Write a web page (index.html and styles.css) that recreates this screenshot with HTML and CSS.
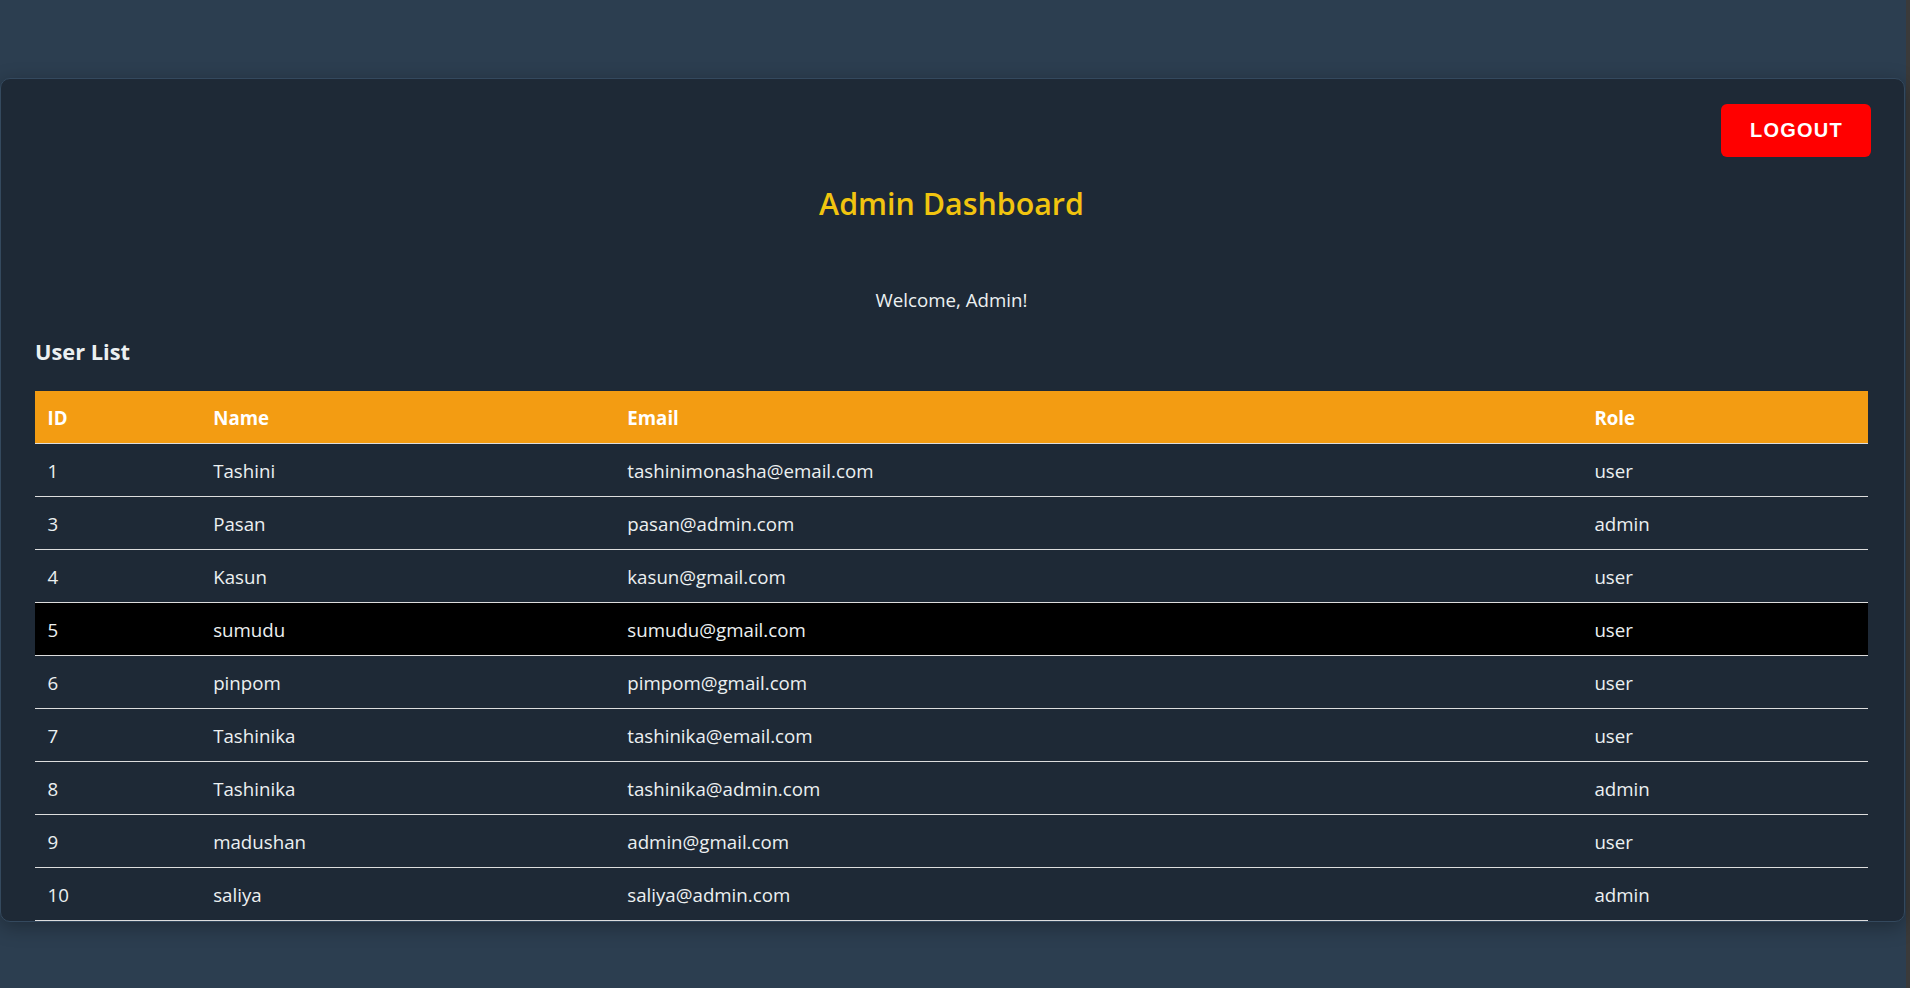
FILE: index.html
```html
<!DOCTYPE html>
<html lang="en">
<head>
<meta charset="utf-8">
<title>Admin Dashboard</title>
<link rel="stylesheet" href="styles.css">
</head>
<body>
<main class="card">
  <div class="topbar">
    <button class="logout" type="button">Logout</button>
  </div>
  <h2 class="title">Admin Dashboard</h2>
  <p class="welcome">Welcome, Admin!</p>
  <h3 class="section">User List</h3>
  <table class="users">
    <colgroup>
      <col class="c-id">
      <col class="c-name">
      <col class="c-email">
      <col class="c-role">
    </colgroup>
    <thead>
      <tr><th>ID</th><th>Name</th><th>Email</th><th>Role</th></tr>
    </thead>
    <tbody>
      <tr><td>1</td><td>Tashini</td><td>tashinimonasha@email.com</td><td>user</td></tr>
      <tr><td>3</td><td>Pasan</td><td>pasan@admin.com</td><td>admin</td></tr>
      <tr><td>4</td><td>Kasun</td><td>kasun@gmail.com</td><td>user</td></tr>
      <tr class="active"><td>5</td><td>sumudu</td><td>sumudu@gmail.com</td><td>user</td></tr>
      <tr><td>6</td><td>pinpom</td><td>pimpom@gmail.com</td><td>user</td></tr>
      <tr><td>7</td><td>Tashinika</td><td>tashinika@email.com</td><td>user</td></tr>
      <tr><td>8</td><td>Tashinika</td><td>tashinika@admin.com</td><td>admin</td></tr>
      <tr><td>9</td><td>madushan</td><td>admin@gmail.com</td><td>user</td></tr>
      <tr><td>10</td><td>saliya</td><td>saliya@admin.com</td><td>admin</td></tr>
    </tbody>
  </table>
</main>
</body>
</html>
```

FILE: styles.css
```css
html {
  background: linear-gradient(to right, #2c3e50 calc(100% - 4px), #3a3a3a calc(100% - 4px));
  min-height: 100%;
}

body {
  margin: 0;
  min-height: 100vh;
  font-family: "Segoe UI", "Open Sans", "Noto Sans", sans-serif;
  color: #ecf0f1;
  overflow: hidden;
}

.card {
  box-sizing: border-box;
  width: 1905px;
  margin: 78px 0 0 0;
  padding: 25px 36px 0 34px;
  background: #1e2936;
  border: 1px solid #34495e;
  border-radius: 10px;
  box-shadow: 0 5px 20px rgba(0, 0, 0, 0.3);
  display: flex;
  flex-direction: column;
}

.topbar {
  display: flex;
  justify-content: flex-end;
  margin-right: -3px;
}

.logout {
  font-family: "Liberation Sans", Arial, sans-serif;
  font-size: 20px;
  font-weight: 700;
  line-height: 23px;
  letter-spacing: 1.25px;
  text-transform: uppercase;
  color: #ffffff;
  background: #ff0000;
  border: none;
  border-radius: 6px;
  padding: 15px 28px 15px 29px;
  cursor: pointer;
}

.title {
  margin: 27.5px 0 0 0;
  font-size: 30.4px;
  line-height: 38px;
  font-weight: 600;
  color: #f1c40f;
  text-align: center;
}

.welcome {
  margin: 64.5px 0 0 0;
  font-size: 18.7px;
  line-height: 26px;
  text-align: center;
  color: #ecf0f1;
}

.section {
  margin: 24px 0 0 0;
  font-size: 21.8px;
  line-height: 30px;
  font-weight: 700;
  color: #ecf0f1;
}

.users {
  margin-top: 24px;
  width: 1833px;
  border-collapse: collapse;
  table-layout: fixed;
  font-size: 18.7px;
  line-height: 26px;
}

.c-id { width: 165.7px; }
.c-name { width: 414.1px; }
.c-email { width: 967.1px; }
.c-role { width: 286.1px; }

.users th,
.users td {
  text-align: left;
  padding: 14px 12.5px 12px;
  border-bottom: 1px solid #dddddd;
  white-space: nowrap;
}

.users th {
  background: #f39c12;
  color: #ffffff;
  font-weight: 700;
}

.users td {
  color: #ecf0f1;
}

.users tr.active td {
  background: #000000;
}
```
